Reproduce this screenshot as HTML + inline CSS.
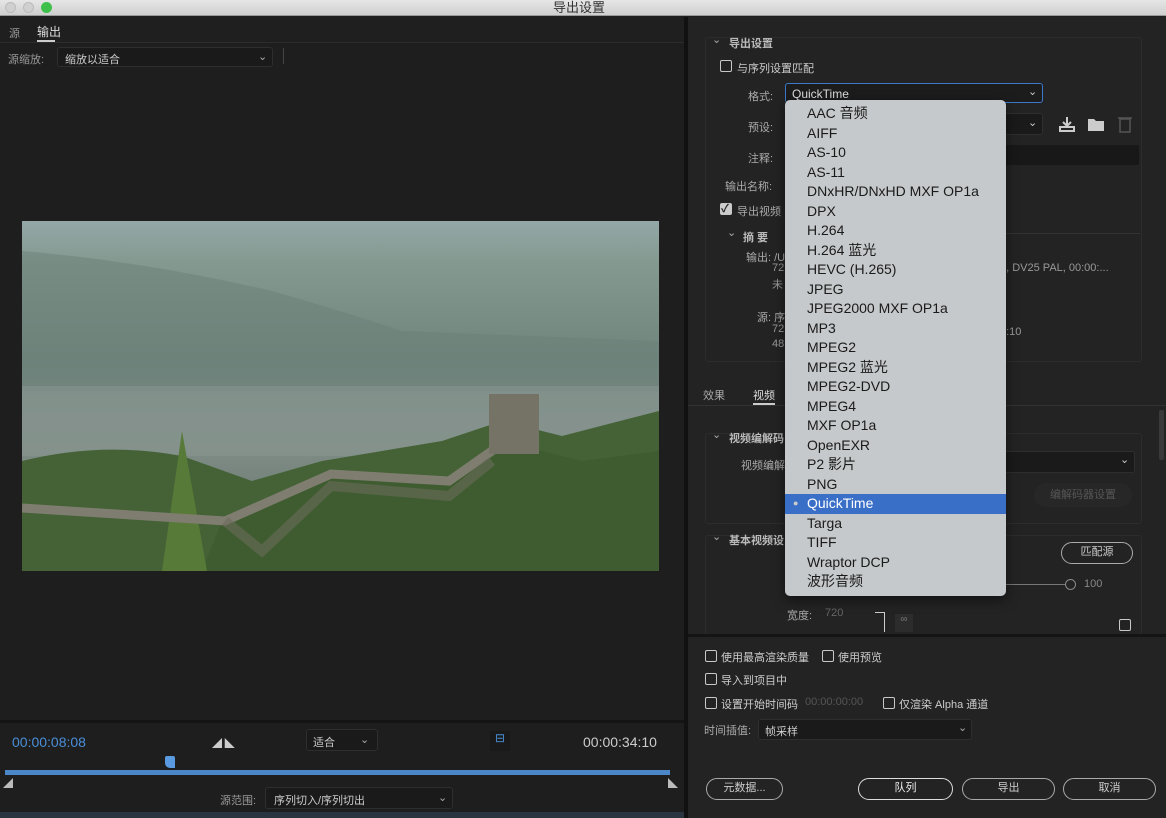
<!DOCTYPE html>
<html><head><meta charset="utf-8"><style>
*{margin:0;padding:0;box-sizing:border-box}
body{width:1166px;height:818px;background:#1e1e1e;font-family:"Liberation Sans","Noto Sans CJK SC",sans-serif;font-size:11px;color:#b8b8b8;position:relative;overflow:hidden}
.a{position:absolute;white-space:nowrap}
.cb{position:absolute;width:12px;height:12px;border:1.5px solid #c8c8c8;border-radius:2px}
.dd{position:absolute;background:#1a1a1a;border:1px solid #2e2e2e;border-radius:3px}
.btn{position:absolute;height:22px;border:1.5px solid #aaa;border-radius:11px;text-align:center;line-height:19px;color:#ccc}
.menu div{height:19.5px;line-height:19.5px;padding-left:22px;font-size:14px;color:#1a1a1a}
</style></head><body>
<div class="a" style="left:0;top:0;width:1166px;height:16px;background:linear-gradient(#e6e6e6,#cfcfcf);border-bottom:1px solid #999"></div>
<div class="a" style="left:5px;top:2px;width:11px;height:11px;border-radius:50%;background:#d0d0d0;border:1px solid #bbb"></div>
<div class="a" style="left:23px;top:2px;width:11px;height:11px;border-radius:50%;background:#d0d0d0;border:1px solid #bbb"></div>
<div class="a" style="left:41px;top:2px;width:11px;height:11px;border-radius:50%;background:#3fc04a"></div>
<div class="a" style="left:553px;top:0;font-size:13px;color:#333;line-height:16px">导出设置</div>
<div class="a" style="left:0;top:17px;width:684px;height:26px;background:#1f1f1f;border-bottom:1px solid #2c2c2c"></div>
<div class="a" style="left:9px;top:25px;color:#999">源</div>
<div class="a" style="left:37px;top:23px;color:#ddd;font-size:12px">输出</div>
<div class="a" style="left:37px;top:40px;width:18px;height:2px;background:#ccc"></div>
<div class="a" style="left:8px;top:51px;color:#999">源缩放:</div>
<div class="dd" style="left:57px;top:47px;width:216px;height:20px"></div>
<div class="a" style="left:65px;top:51px;color:#ccc">缩放以适合</div>
<div class="a" style="left:258px;top:50px;color:#aaa">⌄</div>
<div class="a" style="left:283px;top:48px;width:1px;height:16px;background:#444"></div>
<svg class="a" style="left:22px;top:221px" width="637" height="350" viewBox="0 0 637 350">
<defs><linearGradient id="sky" x1="0" y1="0" x2="0" y2="1"><stop offset="0" stop-color="#93a8a7"/><stop offset=".12" stop-color="#84998f"/><stop offset=".4" stop-color="#6f857c"/><stop offset=".5" stop-color="#7a8a84"/><stop offset=".65" stop-color="#7e8c86"/><stop offset="1" stop-color="#5e6e60"/></linearGradient></defs>
<rect width="637" height="350" fill="url(#sky)"/>
<path d="M0 30 Q120 40 250 70 Q320 90 380 110 L637 120 L637 170 L0 170Z" fill="#6a8078" opacity=".5"/>
<rect x="0" y="165" width="637" height="70" fill="#8f9a94" opacity=".45"/>
<path d="M0 240 Q80 220 160 235 L230 260 L300 240 L420 220 L480 200 L540 215 L637 190 L637 350 L0 350Z" fill="#446236"/>
<path d="M200 300 L310 258 L427 265 L480 230 L520 230 L560 240 L637 230 L637 350 L180 350Z" fill="#3e5c2f"/>
<path d="M160 210 L185 350 L140 350Z" fill="#587a38"/>
<path d="M0 287 L203 300 L309 253 L427 260 L488 217" stroke="#7f7d70" stroke-width="9" fill="none"/>
<path d="M203 300 L240 330 L309 265 L427 275 L470 240" stroke="#6b6a5c" stroke-width="10" fill="none" opacity=".6"/>
<rect x="467" y="173" width="50" height="60" fill="#757266"/>
</svg>
<div class="a" style="left:0;top:720px;width:684px;height:3px;background:#141414"></div>
<div class="a" style="left:12px;top:734px;color:#4a8ed8;font-size:14px">00:00:08:08</div>
<div class="a" style="left:212px;top:735px;color:#ccc;font-size:10px">◢ ◣</div>
<div class="dd" style="left:306px;top:729px;width:72px;height:22px"></div>
<div class="a" style="left:313px;top:734px;color:#ccc">适合</div><div class="a" style="left:360px;top:733px;color:#aaa">⌄</div>
<div class="a" style="left:490px;top:731px;width:20px;height:20px;background:#1a1a1a;color:#4a8ed8;font-size:12px;text-align:center">⊟</div>
<div class="a" style="left:583px;top:734px;color:#ccc;font-size:14px">00:00:34:10</div>
<div class="a" style="left:5px;top:770px;width:665px;height:5px;background:#4a86c8"></div>
<div class="a" style="left:165px;top:756px;width:10px;height:12px;background:#5a9ae0;border-radius:2px 2px 0 5px"></div>
<div class="a" style="left:3px;top:775px;color:#bbb;font-size:10px">◢</div><div class="a" style="left:668px;top:775px;color:#bbb;font-size:10px">◣</div>
<div class="a" style="left:220px;top:792px;color:#999">源范围:</div>
<div class="dd" style="left:265px;top:787px;width:188px;height:22px"></div>
<div class="a" style="left:274px;top:792px;color:#ccc">序列切入/序列切出</div><div class="a" style="left:438px;top:791px;color:#aaa">⌄</div>
<div class="a" style="left:0;top:812px;width:684px;height:6px;background:#2a3540"></div>
<div class="a" style="left:684px;top:17px;width:4px;height:801px;background:#111"></div>
<div class="a" style="left:688px;top:17px;width:478px;height:801px;background:#232323"></div>
<div class="a" style="left:705px;top:37px;width:437px;height:325px;border:1px solid #2c2c2c;border-radius:3px"></div>
<div class="a" style="left:712px;top:33px;color:#aaa">⌄</div>
<div class="a" style="left:729px;top:35px;color:#bbb;font-weight:bold">导出设置</div>
<div class="cb" style="left:720px;top:60px"></div><div class="a" style="left:737px;top:60px;color:#ccc">与序列设置匹配</div>
<div class="a" style="left:748px;top:88px;color:#aaa">格式:</div>
<div class="a" style="left:785px;top:83px;width:258px;height:20px;border:1.5px solid #3d78c8;border-radius:3px;background:#1c1c1c"></div>
<div class="a" style="left:792px;top:87px;color:#ddd;font-size:12px">QuickTime</div><div class="a" style="left:1028px;top:85px;color:#ccc">⌄</div>
<div class="a" style="left:748px;top:119px;color:#aaa">预设:</div>
<div class="dd" style="left:785px;top:113px;width:258px;height:22px"></div><div class="a" style="left:1028px;top:116px;color:#ccc">⌄</div>
<svg class="a" style="left:1058px;top:115px" width="80" height="18"><path d="M9 2v8M5 7l4 4 4-4M2 12h14v4H2z" stroke="#ccc" stroke-width="2" fill="none"/><path d="M30 4h6l2 2h8v10H30z" fill="#ccc"/><rect x="62" y="4" width="10" height="13" stroke="#555" fill="none" stroke-width="1.5"/><path d="M60 3h14" stroke="#555" stroke-width="1.5"/></svg>
<div class="a" style="left:748px;top:150px;color:#aaa">注释:</div>
<div class="a" style="left:785px;top:145px;width:354px;height:20px;background:#181818;border-radius:2px"></div>
<div class="a" style="left:725px;top:178px;color:#aaa">输出名称:</div>
<div class="cb" style="left:720px;top:203px;background:#ccc"></div><div class="a" style="left:721px;top:200px;color:#222;font-size:11px;font-weight:bold">✓</div><div class="a" style="left:737px;top:203px;color:#aaa">导出视频</div>
<div class="a" style="left:727px;top:226px;color:#aaa">⌄</div><div class="a" style="left:743px;top:229px;color:#bbb;font-weight:bold">摘 要</div>
<div class="a" style="left:785px;top:233px;width:355px;height:1px;background:#333"></div>
<div class="a" style="left:746px;top:249px;color:#aaa">输出: /U</div>
<div class="a" style="left:772px;top:262px;color:#999">72</div><div class="a" style="left:1000px;top:262px;color:#999">0, DV25 PAL, 00:00:...</div>
<div class="a" style="left:772px;top:276px;color:#999">未</div>
<div class="a" style="left:757px;top:309px;color:#aaa">源: 序</div>
<div class="a" style="left:772px;top:323px;color:#999">72</div><div class="a" style="left:1000px;top:326px;color:#999">4:10</div>
<div class="a" style="left:772px;top:338px;color:#999">48</div>
<div class="a" style="left:688px;top:378px;width:478px;height:28px;border-bottom:1px solid #333"></div>
<div class="a" style="left:703px;top:387px;color:#aaa">效果</div>
<div class="a" style="left:753px;top:387px;color:#ddd">视频</div>
<div class="a" style="left:753px;top:403px;width:22px;height:2px;background:#ccc"></div>
<div class="a" style="left:705px;top:433px;width:437px;height:91px;border:1px solid #2c2c2c;border-radius:3px"></div>
<div class="a" style="left:712px;top:428px;color:#aaa">⌄</div><div class="a" style="left:729px;top:430px;color:#bbb;font-weight:bold">视频编解码</div>
<div class="a" style="left:741px;top:457px;color:#aaa">视频编解</div>
<div class="dd" style="left:1000px;top:451px;width:135px;height:22px"></div><div class="a" style="left:1120px;top:453px;color:#ccc">⌄</div>
<div class="a" style="left:1034px;top:483px;width:98px;height:24px;background:#272727;border-radius:12px;color:#555;text-align:center;line-height:24px">编解码器设置</div>
<div class="a" style="left:705px;top:535px;width:437px;height:100px;border:1px solid #2c2c2c;border-radius:3px"></div>
<div class="a" style="left:712px;top:530px;color:#aaa">⌄</div><div class="a" style="left:729px;top:532px;color:#bbb;font-weight:bold">基本视频设</div>
<div class="btn" style="left:1061px;top:542px;width:72px">匹配源</div>
<div class="a" style="left:1005px;top:584px;width:60px;height:1px;background:#777"></div>
<div class="a" style="left:1065px;top:579px;width:11px;height:11px;border:1px solid #888;border-radius:50%"></div>
<div class="a" style="left:1084px;top:578px;color:#888">100</div>
<div class="a" style="left:787px;top:607px;color:#aaa">宽度:</div><div class="a" style="left:825px;top:607px;color:#666">720</div>
<div class="a" style="left:875px;top:612px;width:10px;height:20px;border-top:1px solid #ccc;border-right:1px solid #ccc"></div>
<div class="a" style="left:895px;top:614px;width:18px;height:18px;background:#2c2c2c;color:#777;font-size:10px;text-align:center">∞</div>
<div class="cb" style="left:1119px;top:619px"></div>
<div class="a" style="left:1159px;top:410px;width:5px;height:50px;background:#3a3a3a;border-radius:2px"></div>
<div class="a" style="left:688px;top:634px;width:478px;height:3px;background:#141414"></div>
<div class="cb" style="left:705px;top:650px"></div><div class="a" style="left:721px;top:649px;color:#ccc">使用最高渲染质量</div>
<div class="cb" style="left:822px;top:650px"></div><div class="a" style="left:838px;top:649px;color:#ccc">使用预览</div>
<div class="cb" style="left:705px;top:673px"></div><div class="a" style="left:721px;top:672px;color:#ccc">导入到项目中</div>
<div class="cb" style="left:705px;top:697px"></div><div class="a" style="left:721px;top:696px;color:#ccc">设置开始时间码</div><div class="a" style="left:805px;top:696px;color:#555">00:00:00:00</div>
<div class="cb" style="left:883px;top:697px"></div><div class="a" style="left:899px;top:696px;color:#ccc">仅渲染 Alpha 通道</div>
<div class="a" style="left:704px;top:722px;color:#aaa">时间插值:</div>
<div class="dd" style="left:758px;top:719px;width:214px;height:21px"></div>
<div class="a" style="left:765px;top:723px;color:#ccc">帧采样</div><div class="a" style="left:958px;top:721px;color:#aaa">⌄</div>
<div class="btn" style="left:706px;top:778px;width:77px">元数据...</div>
<div class="btn" style="left:858px;top:778px;width:95px;border-color:#ddd;color:#eee">队列</div>
<div class="btn" style="left:962px;top:778px;width:93px">导出</div>
<div class="btn" style="left:1063px;top:778px;width:93px">取消</div>
<div class="a menu" style="left:785px;top:100px;width:221px;height:496px;background:#c6c9cb;border-radius:5px;padding-top:4px;box-shadow:0 4px 12px rgba(0,0,0,.5)">
<div>AAC 音频</div><div>AIFF</div><div>AS-10</div><div>AS-11</div><div>DNxHR/DNxHD MXF OP1a</div><div>DPX</div><div>H.264</div><div>H.264 蓝光</div><div>HEVC (H.265)</div><div>JPEG</div><div>JPEG2000 MXF OP1a</div><div>MP3</div><div>MPEG2</div><div>MPEG2 蓝光</div><div>MPEG2-DVD</div><div>MPEG4</div><div>MXF OP1a</div><div>OpenEXR</div><div>P2 影片</div><div>PNG</div>
<div style="background:#3a6fc8;color:#fff;position:relative"><span style="position:absolute;left:8px;font-size:9px;color:#ccc">●</span>QuickTime</div>
<div>Targa</div><div>TIFF</div><div>Wraptor DCP</div><div>波形音频</div>
</div>
</body></html>
